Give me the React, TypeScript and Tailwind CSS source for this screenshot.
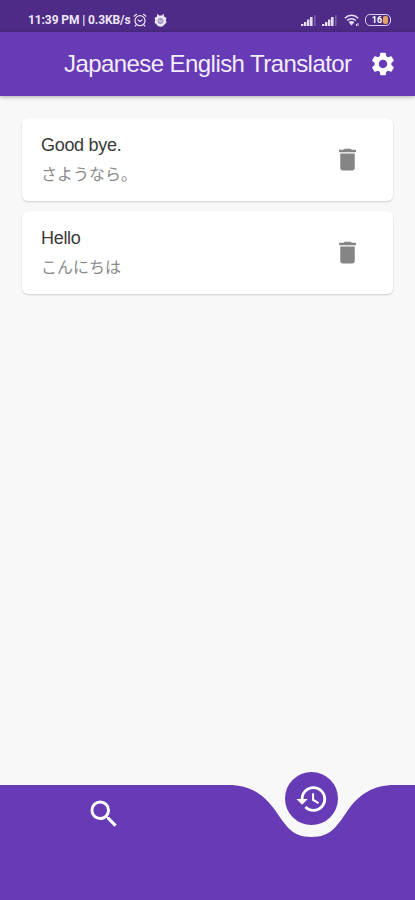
import React from 'react';
import { MdDelete, MdHistory, MdSearch, MdSettings } from 'react-icons/md';

const history = [
    { source: 'Good bye.', target: 'さようなら。' },
    { source: 'Hello', target: 'こんにちは' },
];

const SignalIcon = () => (
    <svg className="h-[11px] w-[15px]" viewBox="0 0 15 11" fill="#e6dcf5">
        <rect x="0" y="9" width="2.4" height="2" />
        <rect x="3" y="7" width="2.4" height="4" />
        <rect x="6" y="4.5" width="2.4" height="6.5" />
        <rect x="9" y="2" width="2.6" height="9" />
        <rect x="13" y="0" width="1.6" height="11" opacity="0.3" />
    </svg>
);

const StatusBar = () => (
    <div className="flex h-8 items-center justify-between bg-[#4d2b86] pt-2 pr-[24px] pl-7">
        <div className="flex items-center">
            <span className="w-[103px] font-['Roboto',sans-serif] text-[12px] leading-4 font-bold tracking-[-0.1px] whitespace-nowrap text-[#eee6fa]">
                11:39 PM | 0.3KB/s
            </span>
            {/* Alarm */}
            <svg className="ml-[2px] h-[14px] w-[14px]" viewBox="0 0 14 14" fill="none" stroke="#e6dcf5" strokeWidth="1.3">
                <circle cx="7" cy="7.7" r="5" />
                <path d="M0.8 3.5L3.8 1M13.2 3.5L10.2 1M4.8 6.8L7 8.5L9.5 6.8M3 12L2 13.3M11 12L12 13.3" />
            </svg>
            {/* Debugging */}
            <svg className="ml-[7px] h-[14px] w-[13px]" viewBox="0 0 13 14">
                <path d="M3.3 0.5L5 2.5H8L9.7 0.5L10 3.5L12.5 5L11.8 7L12.5 9.5L10.5 11.5C9.5 13 8 13.7 6.5 13.7S3.5 13 2.5 11.5L0.5 9.5L1.2 7L0.5 5L3 3.5Z" fill="#eee6fa" />
                <circle cx="6.5" cy="8" r="3" fill="#a394bd" />
                <path d="M4.5 7L6.5 9L8.5 7" stroke="#eee6fa" fill="none" />
            </svg>
        </div>
        <div className="flex items-center">
            <SignalIcon />
            <div className="w-[6px]" />
            <SignalIcon />
            {/* Wifi */}
            <svg className="ml-[7px] h-[12px] w-[15px]" viewBox="0 0 15 12" fill="none" stroke="#e6dcf5" strokeWidth="1.5">
                <path d="M0.8 4.2C4.5 0.4 10.5 0.4 14.2 4.2M3.2 6.6C5.5 4.2 9.5 4.2 11.8 6.6" />
                <path d="M4.5 8C6 6.8 9 6.8 10.5 8L7.5 11.5Z" fill="#e6dcf5" stroke="none" />
                <path d="M12.5 10V12M14 9V12" strokeWidth="1" />
            </svg>
            {/* Battery */}
            <div className="ml-[6px] flex h-[12px] w-[26px] items-center justify-center rounded-[5px] border-[1.5px] border-[#d9cdec] pl-1 font-['Roboto',sans-serif] text-[9px] leading-none font-bold text-white">
                16
                <span className="ml-px h-[8px] w-[5px] rounded-[2px] bg-[#e0a264]" />
            </div>
        </div>
    </div>
);

const App = () => {
    return (
        <div className="flex h-[900px] w-[415px] flex-col overflow-hidden bg-[#f8f8f8] font-['Liberation_Sans','Noto_Sans_CJK_JP',sans-serif]">
            <StatusBar />

            <header className="flex h-16 items-center justify-end bg-[#673ab6] pr-[18px] shadow-[0_1px_4px_rgba(0,0,0,0.3)]">
                <h1 className="w-[287px] text-[24px] tracking-[-0.57px] whitespace-nowrap text-[#f3edfb]">
                    Japanese English Translator
                </h1>
                <MdSettings className="ml-[18px] size-7 shrink-0 text-white" />
            </header>

            {/* Translation history */}
            <main className="flex flex-1 flex-col gap-[10px] px-[22px] pt-[22px]">
                {history.map((item) => (
                    <div
                        key={item.source}
                        className="flex h-[83px] items-center justify-between rounded-[6px] bg-white pr-[31px] pl-[19px] shadow-[0_1px_2px_rgba(0,0,0,0.18)]"
                    >
                        <div className="pt-[2px]">
                            <p className="text-[18px] leading-[28px] tracking-[-0.3px] text-[#3a3a3a]">{item.source}</p>
                            <p className="text-[16px] leading-[32px] text-[#8a8a8a]">{item.target}</p>
                        </div>
                        <MdDelete className="size-[29px] text-[#858585]" />
                    </div>
                ))}
            </main>

            {/* Bottom navigation */}
            <nav className="relative h-[115px] shrink-0">
                <svg className="absolute inset-0 h-full w-full" viewBox="0 0 415 115" fill="#673ab6">
                    <path d="M0 0H228C251 0 264 10 275 25C286 41 292 52 311.5 52C331 52 337 41 348 25C359 10 372 0 395 0H415V115H0Z" />
                </svg>
                <button className="absolute top-[11px] left-[86px] text-white">
                    <MdSearch className="size-[36px]" />
                </button>
                <button className="absolute top-[-13px] left-[285px] flex size-[53px] items-center justify-center rounded-full bg-[#673ab6] text-white">
                    <MdHistory className="size-[34px]" />
                </button>
            </nav>
        </div>
    );
};

export default App;
